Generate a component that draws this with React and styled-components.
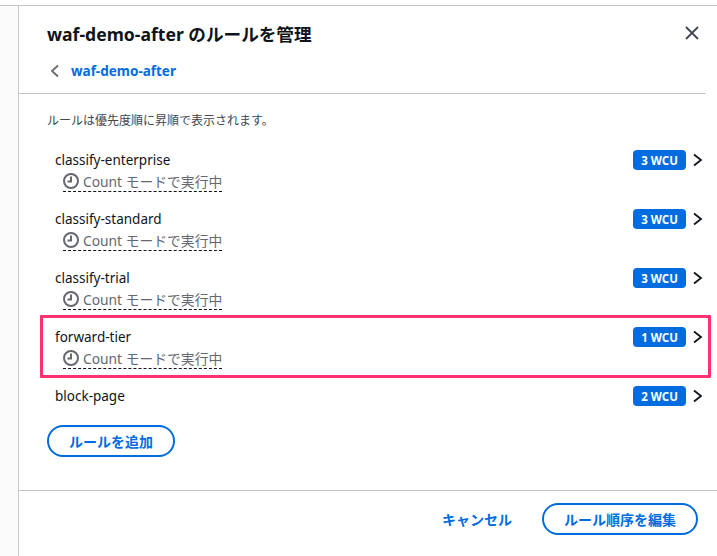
import React from 'react';
import styled, { createGlobalStyle } from 'styled-components';

const rules = [
  { name: 'classify-enterprise', wcu: 3, count: true },
  { name: 'classify-standard', wcu: 3, count: true },
  { name: 'classify-trial', wcu: 3, count: true },
  { name: 'forward-tier', wcu: 1, count: true, marked: true },
  { name: 'block-page', wcu: 2 },
];

const blue = '#006ce0';
const line = '#c6c6cd';

const GlobalStyle = createGlobalStyle`
  html, body {
    margin: 0;
    background: #fff;
    overflow: hidden;
  }
  body {
    font-family: "Noto Sans", "Noto Sans CJK JP", sans-serif;
    color: #0f141a;
  }
`;

const Page = styled.div`
  width: 717px;
  height: 556px;
  padding-top: 5px;
  box-sizing: border-box;
  display: flex;
  flex-direction: column;
`;

const Frame = styled.div`
  flex: 1;
  display: flex;
  min-height: 0;
  border-top: 1px solid ${line};
`;

const Gutter = styled.div`
  width: 18px;
  background: #fbfbfb;
  border-right: 1px solid ${line};
`;

const Dialog = styled.div`
  flex: 1;
  min-width: 0;
  display: flex;
  flex-direction: column;
`;

const Header = styled.header`
  height: 88px;
  margin-right: 11px;
  box-sizing: border-box;
  padding: 15px 0 0 28px;
  border-bottom: 1px solid ${line};
  position: relative;
`;

const Title = styled.h1`
  margin: 0;
  font-size: 17.6px;
  line-height: 26px;
  font-weight: 700;
`;

const Close = styled.button`
  position: absolute;
  top: 19px;
  right: 6px;
  padding: 0;
  border: 0;
  background: none;
  display: flex;
  color: #424650;
`;

const Back = styled.div`
  margin-top: 14px;
  display: flex;
  align-items: center;
  gap: 11px;
  padding-left: 3px;
  color: #656871;
`;

const BackLink = styled.a`
  color: ${blue};
  font-size: 13.5px;
  line-height: 20px;
  font-weight: 700;
`;

const Body = styled.main`
  flex: 1;
  padding: 18px 0 0 28px;
`;

const Hint = styled.p`
  margin: 0 0 21px;
  font-size: 12px;
  line-height: 17px;
  color: #424650;
`;

const List = styled.ul`
  margin: 0;
  padding: 0;
  list-style: none;
`;

const Row = styled.li`
  height: 59px;
  box-sizing: border-box;
  padding: 0 14px 0 8px;
  position: relative;
  display: flex;
  justify-content: space-between;
  align-items: flex-start;

  ${({ $marked }) => $marked && `
    &::after {
      content: '';
      position: absolute;
      left: -7px;
      right: 6px;
      top: -12px;
      height: 63px;
      box-sizing: border-box;
      border: 3px solid #ff3170;
      border-radius: 1px;
    }
  `}
`;

const RuleInfo = styled.div`
  display: flex;
  flex-direction: column;
  align-items: flex-start;
`;

const RuleName = styled.span`
  font-size: 13.5px;
  line-height: 20px;
`;

const Status = styled.span`
  margin: 1px 0 0 8px;
  display: flex;
  align-items: center;
  gap: 4px;
  height: 20px;
  font-size: 13.8px;
  color: #656871;
  border-bottom: 1px dashed #0f141a;
`;

const RuleMeta = styled.div`
  display: flex;
  align-items: center;
  gap: 5px;
  height: 20px;
`;

const Badge = styled.span`
  width: 53px;
  height: 20px;
  border-radius: 4px;
  background: ${blue};
  color: #fff;
  font-size: 11.5px;
  font-weight: 700;
  display: flex;
  align-items: center;
  justify-content: center;
`;

const Chevron = styled.span`
  display: flex;
  color: #0f141a;
`;

const PillButton = styled.button`
  height: 32px;
  padding: 0 20px;
  border: 2px solid ${blue};
  border-radius: 16px;
  background: #fff;
  color: ${blue};
  font: 700 14px "Noto Sans", "Noto Sans CJK JP", sans-serif;
  box-sizing: border-box;
`;

const AddRow = styled.div`
  margin-top: -20px;
`;

const Footer = styled.footer`
  height: 66px;
  box-sizing: border-box;
  border-top: 1px solid ${line};
  padding: 12px 19px 0 0;
  display: flex;
  justify-content: flex-end;
  align-items: flex-start;
  gap: 30px;
`;

const TextButton = styled.button`
  height: 32px;
  padding: 0;
  border: 0;
  background: none;
  color: ${blue};
  font: 700 14px "Noto Sans", "Noto Sans CJK JP", sans-serif;
`;

const ClockIcon = () => (
  <svg width="16" height="16" viewBox="0 0 16 16" fill="none" stroke="#656871" strokeWidth="2">
    <circle cx="8" cy="8" r="7" />
    <path d="M8 3.5V8.5H4.5" />
  </svg>
);

const ChevronRight = () => (
  <svg width="12" height="16" viewBox="0 0 12 16" fill="none" stroke="currentColor" strokeWidth="1.8">
    <path d="M3 2.5L10 8L3 13.5" />
  </svg>
);

export default function App() {
  return (
    <>
      <GlobalStyle />
      <Page>
        <Frame>
          <Gutter />
          <Dialog>
            <Header>
              <Title>waf-demo-after のルールを管理</Title>
              <Back>
                <svg width="10" height="16" viewBox="0 0 10 16" fill="none" stroke="currentColor" strokeWidth="1.8">
                  <path d="M8 2.5L2 8L8 13.5" />
                </svg>
                <BackLink>waf-demo-after</BackLink>
              </Back>
              <Close aria-label="閉じる">
                <svg width="16" height="16" viewBox="0 0 16 16" fill="none" stroke="currentColor" strokeWidth="1.8">
                  <path d="M2 2L14 14M14 2L2 14" />
                </svg>
              </Close>
            </Header>
            <Body>
              <Hint>ルールは優先度順に昇順で表示されます。</Hint>
              <List>
                {rules.map(rule => (
                  <Row key={rule.name} $marked={rule.marked}>
                    <RuleInfo>
                      <RuleName>{rule.name}</RuleName>
                      {rule.count && (
                        <Status>
                          <ClockIcon />
                          Count モードで実行中
                        </Status>
                      )}
                    </RuleInfo>
                    <RuleMeta>
                      <Badge>{rule.wcu} WCU</Badge>
                      <Chevron><ChevronRight /></Chevron>
                    </RuleMeta>
                  </Row>
                ))}
              </List>
              <AddRow>
                <PillButton>ルールを追加</PillButton>
              </AddRow>
            </Body>
            <Footer>
              <TextButton>キャンセル</TextButton>
              <PillButton>ルール順序を編集</PillButton>
            </Footer>
          </Dialog>
        </Frame>
      </Page>
    </>
  );
}
